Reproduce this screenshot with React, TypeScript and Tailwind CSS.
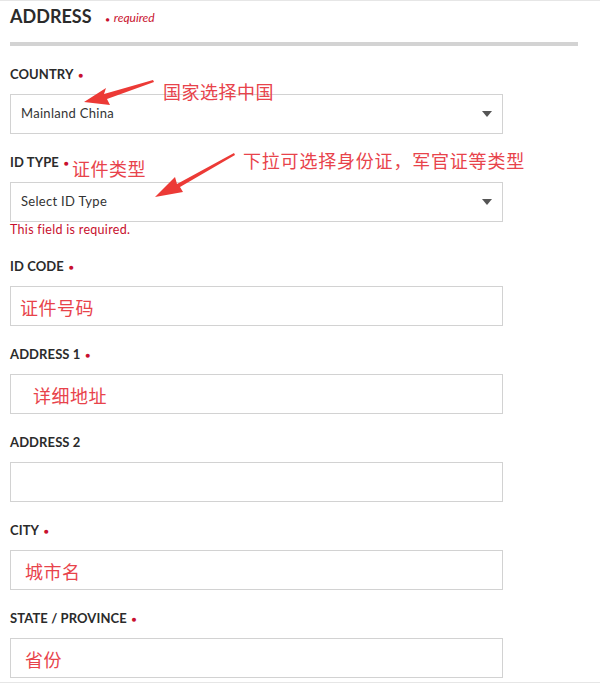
const latin = "font-['Lato','Liberation_Sans',sans-serif]"
const cjk = "font-['Noto_Sans_CJK_SC','Noto_Sans',sans-serif]"

function Dot() {
  return <span className="ml-[5px] text-[8px] text-[#c8102e]">●</span>
}

function Caret() {
  return (
    <svg width="10" height="6" viewBox="0 0 10 6" className="mr-[10px]">
      <path d="M0 0 H10 L5 6 Z" fill="#555" />
    </svg>
  )
}

function Field({
  label,
  required,
  select,
  value,
  hint,
  hintPad = 'pl-[10px]',
  error,
}: {
  label: string
  required?: boolean
  select?: boolean
  value?: string
  hint?: string
  hintPad?: string
  error?: string
}) {
  return (
    <div className="mt-[19px]">
      <div className={`${latin} flex h-[20px] items-center text-[13px] font-bold uppercase tracking-[0.1px] text-[#2b2b2b]`}>
        {label}
        {required && <Dot />}
      </div>
      <div className="mt-[9px] flex h-[40px] w-[493px] items-center justify-between border border-[#d2d2d2] bg-white">
        {value && <span className={`${latin} pl-[10px] text-[13px] tracking-[0.3px] text-[#333]`}>{value}</span>}
        {hint && <span className={`${cjk} ${hintPad} pt-[3px] text-[18px] tracking-[0.5px] text-[#e8434b]`}>{hint}</span>}
        {select && <Caret />}
      </div>
      {error && (
        <div className={`${latin} h-[16px] text-[12.5px] leading-[16px] tracking-[0.3px] text-[#c8102e]`}>{error}</div>
      )}
    </div>
  )
}

export default function App() {
  return (
    <div className="relative h-[683px] w-[600px] overflow-hidden border-t border-[#e6e6e6] bg-white pl-[10px]">
      <div className="flex h-[28px] items-center pt-[3px]">
        <span className={`${latin} text-[18px] font-bold text-[#2b2b2b]`}>ADDRESS</span>
        <span className={`${latin} ml-[14px] pt-[3px] text-[12px] italic text-[#c8102e]`}>
          <span className="mr-[4px] text-[7px] not-italic">●</span>required
        </span>
      </div>
      <div className="mt-[13px] h-[4px] w-[568px] bg-[#d3d3d3]" />

      <Field label="Country" required select value="Mainland China" />
      <Field label="ID Type" required select value="Select ID Type" error="This field is required." />
      <Field label="ID Code" required hint="证件号码" hintPad="pl-[9px]" />
      <Field label="Address 1" required hint="详细地址" hintPad="pl-[22px]" />
      <Field label="Address 2" />
      <Field label="City" required hint="城市名" hintPad="pl-[14px]" />
      <Field label="State / Province" required hint="省份" hintPad="pl-[14px]" />

      <div className="absolute bottom-0 left-0 h-px w-full bg-[#e6e6e6]" />

      {/* annotations */}
      <span className={`${cjk} absolute left-[163px] top-[78px] text-[18px] leading-[24px] tracking-[0.5px] text-[#e8434b]`}>
        国家选择中国
      </span>
      <span className={`${cjk} absolute left-[72px] top-[155px] text-[18px] leading-[24px] tracking-[0.5px] text-[#e8434b]`}>
        证件类型
      </span>
      <span className={`${cjk} absolute left-[243px] top-[147px] text-[18px] leading-[24px] tracking-[0.8px] text-[#e8434b]`}>
        下拉可选择身份证，军官证等类型
      </span>
      <svg className="absolute left-0 top-0" width="600" height="683" viewBox="0 0 600 683">
        <path d="M153 79 L104 93 L106 87 L84 101 L110 104 L107 98 L154 81 Z" fill="#ec3a36" />
        <path d="M234 152 L177 183 L175 176 L155 196 L183 191 L180 186 L235 154 Z" fill="#ec3a36" />
      </svg>
    </div>
  )
}
